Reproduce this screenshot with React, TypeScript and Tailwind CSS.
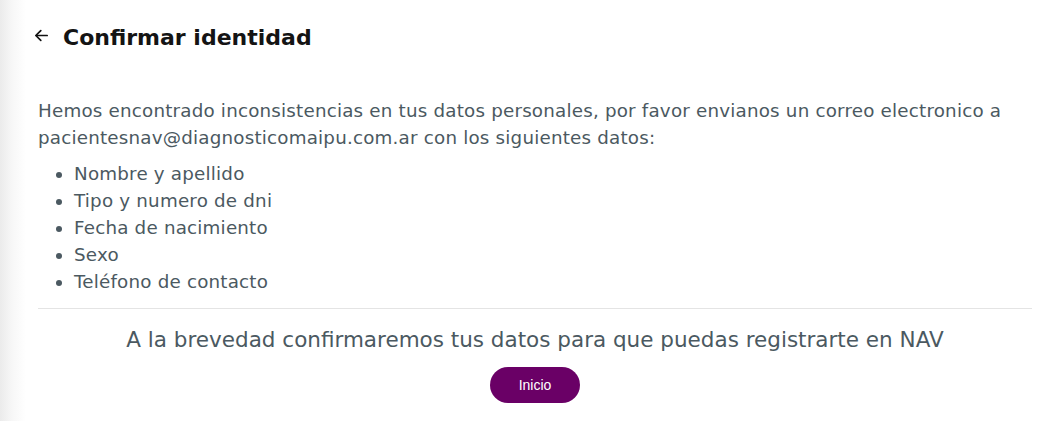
import React from "react";

export default function App() {
  return (
    <div className="w-[1042px] h-[421px] overflow-hidden bg-[linear-gradient(to_right,#ebebeb_0px,#f7f7f7_12px,#ffffff_26px)] font-['DejaVu_Sans',sans-serif]">
      <div className="pl-[38px] pr-[10px]">
        <div className="flex items-center h-[72px] pt-[3px]">
          <svg width="17" height="17" viewBox="0 0 24 24" className="ml-[-5px] mr-[13px] mt-[-4px] text-[#111]" fill="none" stroke="currentColor" strokeWidth="2.4" strokeLinecap="round" strokeLinejoin="round">
            <path d="M20 12H5" />
            <path d="M11 5l-7 7 7 7" />
          </svg>
          <h1 className="text-[22px] font-bold text-[#141414]">Confirmar identidad</h1>
        </div>
        <div className="pt-[25px] text-[#4b5961] text-[18.3px] leading-[27px] tracking-[0.2px]">
          <p>
            Hemos encontrado inconsistencias en tus datos personales, por favor envianos un correo electronico a
            pacientesnav@diagnosticomaipu.com.ar con los siguientes datos:
          </p>
          <ul className="list-disc pl-[36px] mt-[9px] pb-[13px]">
            <li>Nombre y apellido</li>
            <li>Tipo y numero de dni</li>
            <li>Fecha de nacimiento</li>
            <li>Sexo</li>
            <li>Teléfono de contacto</li>
          </ul>
        </div>
        <div className="border-t border-[#e4e4e4]" />
        <p className="text-center text-[#4b5961] text-[21.5px] leading-[30px] pt-[16px]">
          A la brevedad confirmaremos tus datos para que puedas registrarte en NAV
        </p>
        <div className="flex justify-center pt-[12px]">
          <button className="w-[90px] h-[36px] rounded-full bg-[#6a0066] text-white text-[14px] font-['Liberation_Sans',sans-serif]">
            Inicio
          </button>
        </div>
      </div>
    </div>
  );
}
